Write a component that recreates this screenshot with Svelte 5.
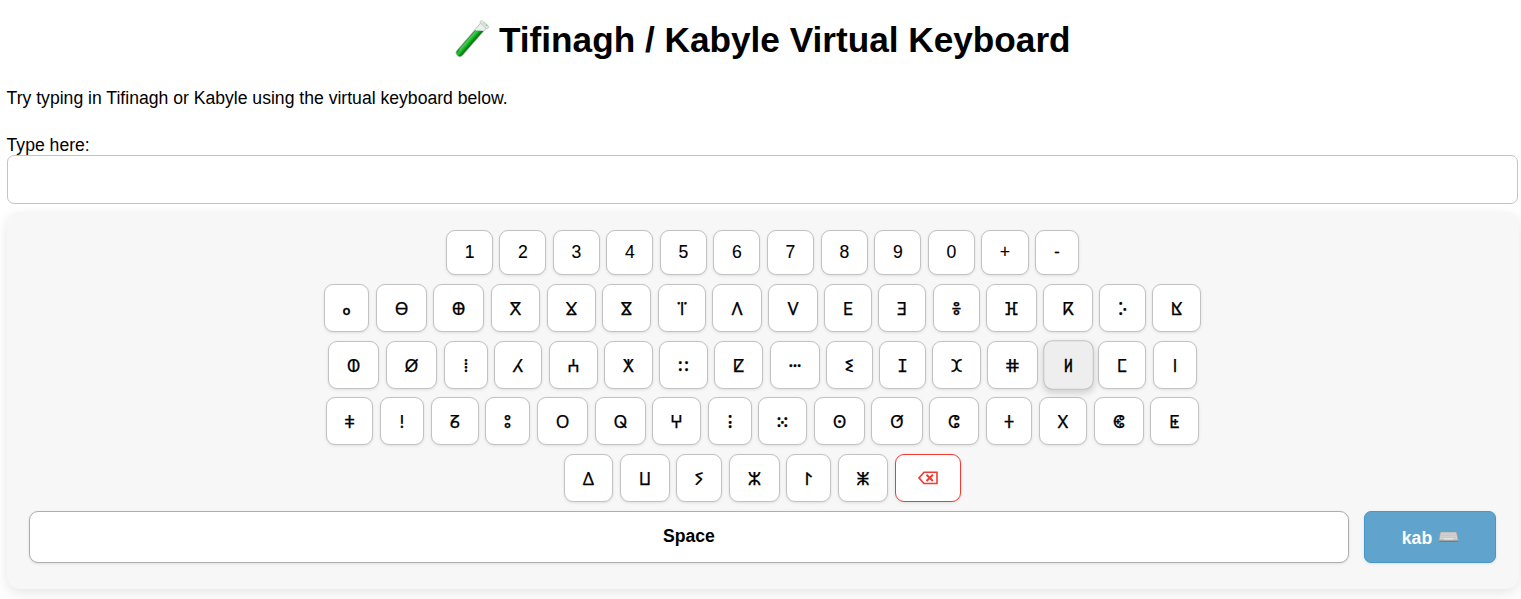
<script>
  const rows = [
    { keys: [...'1234567890+-'], edges: [[446,493],[499.4,546.3],[553,600],[606.3,653.3],[660,707],[713.4,760.4],[767,814],[821,868],[874.4,921.4],[928,975],[981.4,1028.6],[1035,1079]] },
    { keys: [...'ⴰⴱⴲⴳⴴⴵⴶⴷⴸⴹⴺⴻⴼⴽⴾⴿ'], edges: [[324,369],[376,427],[433,484],[491,540],[547,596],[602,651],[658,706],[712,762],[768,818],[824,872],[878,926],[933,980],[986,1037],[1043,1093],[1099,1146],[1152,1201]] },
    { keys: [...'ⵀⵁⵂⵃⵄⵅⵆⵇⵈⵉⵊⵋⵌⵍⵎⵏ'], edges: [[328,379],[386,437],[444,488],[494,542],[549,598],[604,653],[659,708],[714,763],[770,820],[826,873],[879,926],[932,981],[987,1038],[1044,1093],[1098,1146],[1153,1197]] },
    { keys: [...'ⵐⵑⵒⵓⵔⵕⵖⵗⵘⵙⵚⵛⵜⵝⵞⵟ'], edges: [[326,373],[380,424],[431,479],[485,530],[537,588],[595,646],[652,701],[708,752],[758,807],[814,865],[871,923],[929,979],[986,1032],[1039,1087],[1094,1144],[1150,1199]] },
    { keys: [...'ⵠⵡⵢⵣⵤⵥ', '⌫'], edges: [[564,613],[620,670],[676,722],[729,780],[786,831],[838,888],[895,961]] }
  ].map((row) => row.keys.map((label, i) => ({
    label,
    width: row.edges[i][1] - row.edges[i][0],
    gap: i ? row.edges[i][0] - row.edges[i - 1][1] : 0
  })));
  let value = $state('');
</script>

<main>
  <h1>
    <svg class="tube" viewBox="0 0 36 38" aria-hidden="true">
      <defs>
        <linearGradient id="liquid" x1="0" y1="0" x2="1" y2="0">
          <stop offset="0" stop-color="#078016" /><stop offset=".35" stop-color="#25cd32" /><stop offset=".65" stop-color="#0ba01a" /><stop offset="1" stop-color="#05650d" />
        </linearGradient>
      </defs>
      <g transform="rotate(41 18 19)">
        <path d="M14.2 -1h7.6v37a3.8 3.8 0 0 1-7.6 0z" fill="#eceeed" stroke="#b3b8b6" stroke-width=".8" />
        <path d="M14.6 9l6.8-5v32a3.4 3.4 0 0 1-6.8 0z" fill="url(#liquid)" />
        <rect x="12.7" y="-3" width="10.6" height="3.2" rx="1.5" fill="#dfe2e1" stroke="#b5b5b5" stroke-width=".5" />
        <path d="M15.8 2v32" stroke="#fff" stroke-opacity=".35" />
      </g>
      <circle cx="31.5" cy="2" r="1.1" fill="#a4eea6" /><circle cx="33.6" cy="4.2" r=".9" fill="#78dc7d" />
    </svg>
    <span>Tifinagh / Kabyle Virtual Keyboard</span>
  </h1>
  <p>Try typing in Tifinagh or Kabyle using the virtual keyboard below.</p>
  <label for="entry">Type here:</label>
  <input id="entry" bind:value />

  <section class="keyboard">
    {#each rows as row, r}
      <div class="row" class:digits={r === 0}>
        {#each row as key}
          <button
            class="key"
            class:active={key.label === 'ⵍ'}
            class:delete={key.label === '⌫'}
            style="width: {key.width}px; margin-left: {key.gap}px"
            aria-label={key.label}
            onclick={() => (value = key.label === '⌫' ? value.slice(0, -1) : value + key.label)}
          >
            {#if key.label === '⌫'}
              <svg width="20" height="14" viewBox="0 0 20 14" fill="none" stroke="currentColor" stroke-width="1.6">
                <path d="M6 1.2h13v11.3H6L1 6.9z" /><path d="M8.5 3.7l6.4 6.3M14.9 3.7l-6.4 6.3" stroke-width="2" />
              </svg>
            {:else}{key.label}{/if}
          </button>
        {/each}
      </div>
    {/each}
    <div class="bottom">
      <button class="space" onclick={() => (value += ' ')}>Space</button>
      <button class="lang">
        <span>kab</span>
        <svg width="21" height="12" viewBox="0 0 21 12" aria-hidden="true">
          <path d="M2.3 1h16.4l1.8 8v1.5H.5V9z" fill="#aaa7a8" />
          <path d="M3 1.5h15l1.5 7h-18z" fill="#d8d7d8" />
          <path d="M3.4 3h14.3M3 4.7h15M2.6 6.4h16" stroke="#b7b5b6" stroke-width=".7" stroke-dasharray="1.2 .4" />
          <path d="M6 8h9" stroke="#f0f0f0" /><path d="M.6 10.4h19.8" stroke="#777" />
        </svg>
      </button>
    </div>
  </section>
</main>

<style>
  :global(body) { background: #fff; overflow: hidden; }
  main { box-sizing: border-box; height: 599px; padding: 18px 2px 0 6.6px; font: 17.6px/20px "Liberation Sans", Arial, sans-serif; color: #000; overflow: hidden; }
  h1 { display: flex; justify-content: center; align-items: center; height: 44px; margin: 0; font-size: 35.2px; line-height: 44px; white-space: nowrap; }
  .tube { width: 36px; height: 38px; margin: 0 10px 0 -2px; overflow: visible; }
  p { margin: 26px 0 27px; }
  label { display: block; }
  input { display: block; box-sizing: border-box; width: 1511px; height: 49px; margin: 0 0 0 .4px; border: 1px solid #c4c4c4; border-radius: 7px; background: #fff; padding: 12px; font: inherit; outline: none; }
  .keyboard { box-sizing: border-box; width: 1512px; height: 377px; margin: 8px 0 0 .4px; padding: 18px 23px 0 22px; border-radius: 13px; background: #f7f7f7; box-shadow: 0 4px 13px rgb(0 0 0 / .1); }
  .row { display: flex; justify-content: center; height: 48px; margin-bottom: 8.6px; }
  .row.digits { height: 45px; margin-bottom: 9px; }
  button { display: flex; align-items: center; justify-content: center; box-sizing: border-box; flex: none; padding: 0; margin: 0; border: 1px solid #c2c2c2; background: #fff; color: #000; box-shadow: 0 1px 3px rgb(0 0 0 / .1); }
  .key { padding-top: 2px; border-radius: 9px; font: 17.6px/20px "Liberation Sans", "Noto Sans Tifinagh", "DejaVu Sans", sans-serif; -webkit-text-stroke: .25px currentColor; }
  .digits .key { padding: 0 0 2px; -webkit-text-stroke-width: .1px; }
  .active { background: #eee; transform: scale(1.03); box-shadow: 0 3px 7px rgb(0 0 0 / .17); }
  .delete { padding-top: 0; border-color: #f33b30; color: #f33b30; }
  .bottom { display: flex; justify-content: space-between; height: 52px; margin-top: 9.4px; }
  .space { width: 1320px; padding-bottom: 2px; border-color: #adadad; border-radius: 9px; font: bold 17.6px/20px "Liberation Sans", sans-serif; }
  .lang { gap: 6px; width: 132px; padding: 2px 0 0 1px; border-color: #4398cb; border-radius: 7px; background: #60a3cd; color: #fff; font: bold 17.6px/20px "Liberation Sans", sans-serif; }
  .lang svg { margin-top: -2px; }
</style>
